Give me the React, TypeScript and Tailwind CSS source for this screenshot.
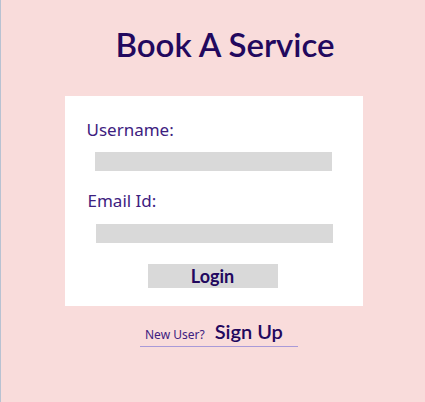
import React from "react";

export default function App() {
  return (
    <div className="w-[425px] h-[402px] bg-[#f9dcdb] border-l border-[#b8c2d2] flex flex-col items-center font-['Lato',sans-serif]">
      <h1 className="mt-[24px] ml-[24px] text-[33px] leading-[40px] font-semibold text-[#22085e]">
        Book A Service
      </h1>
      <form className="mt-[32px] ml-[1px] w-[298px] h-[210px] bg-white flex flex-col pt-[22px] font-['Noto_Sans',sans-serif]">
        <label className="ml-[22px] text-[17px] leading-[24px] text-[#3d2080]">Username:</label>
        <div className="mt-[10px] ml-[30px] w-[237px] h-[19px] bg-[#d9d9d9]" />
        <label className="mt-[18px] ml-[23px] text-[17px] leading-[24px] text-[#3d2080]">Email Id:</label>
        <div className="mt-[11px] ml-[31px] w-[237px] h-[19px] bg-[#d9d9d9]" />
        <button
          type="button"
          className="mt-[21px] ml-[83px] w-[130px] h-[24px] bg-[#d9d9d9] text-[18px] leading-[24px] font-bold text-[#22085e] font-['Lato',sans-serif]"
        >
          Login
        </button>
      </form>
      <div className="mt-[13px] ml-[12px] w-[158px] border-b border-[#a99ad8] flex items-end pb-[3px] pl-[5px] gap-[10px]">
        <span className="text-[12px] leading-[16px] text-[#3d2080] font-['Noto_Sans',sans-serif]">New User?</span>
        <span className="text-[20px] leading-[24px] font-semibold text-[#22085e]">Sign Up</span>
      </div>
    </div>
  );
}
